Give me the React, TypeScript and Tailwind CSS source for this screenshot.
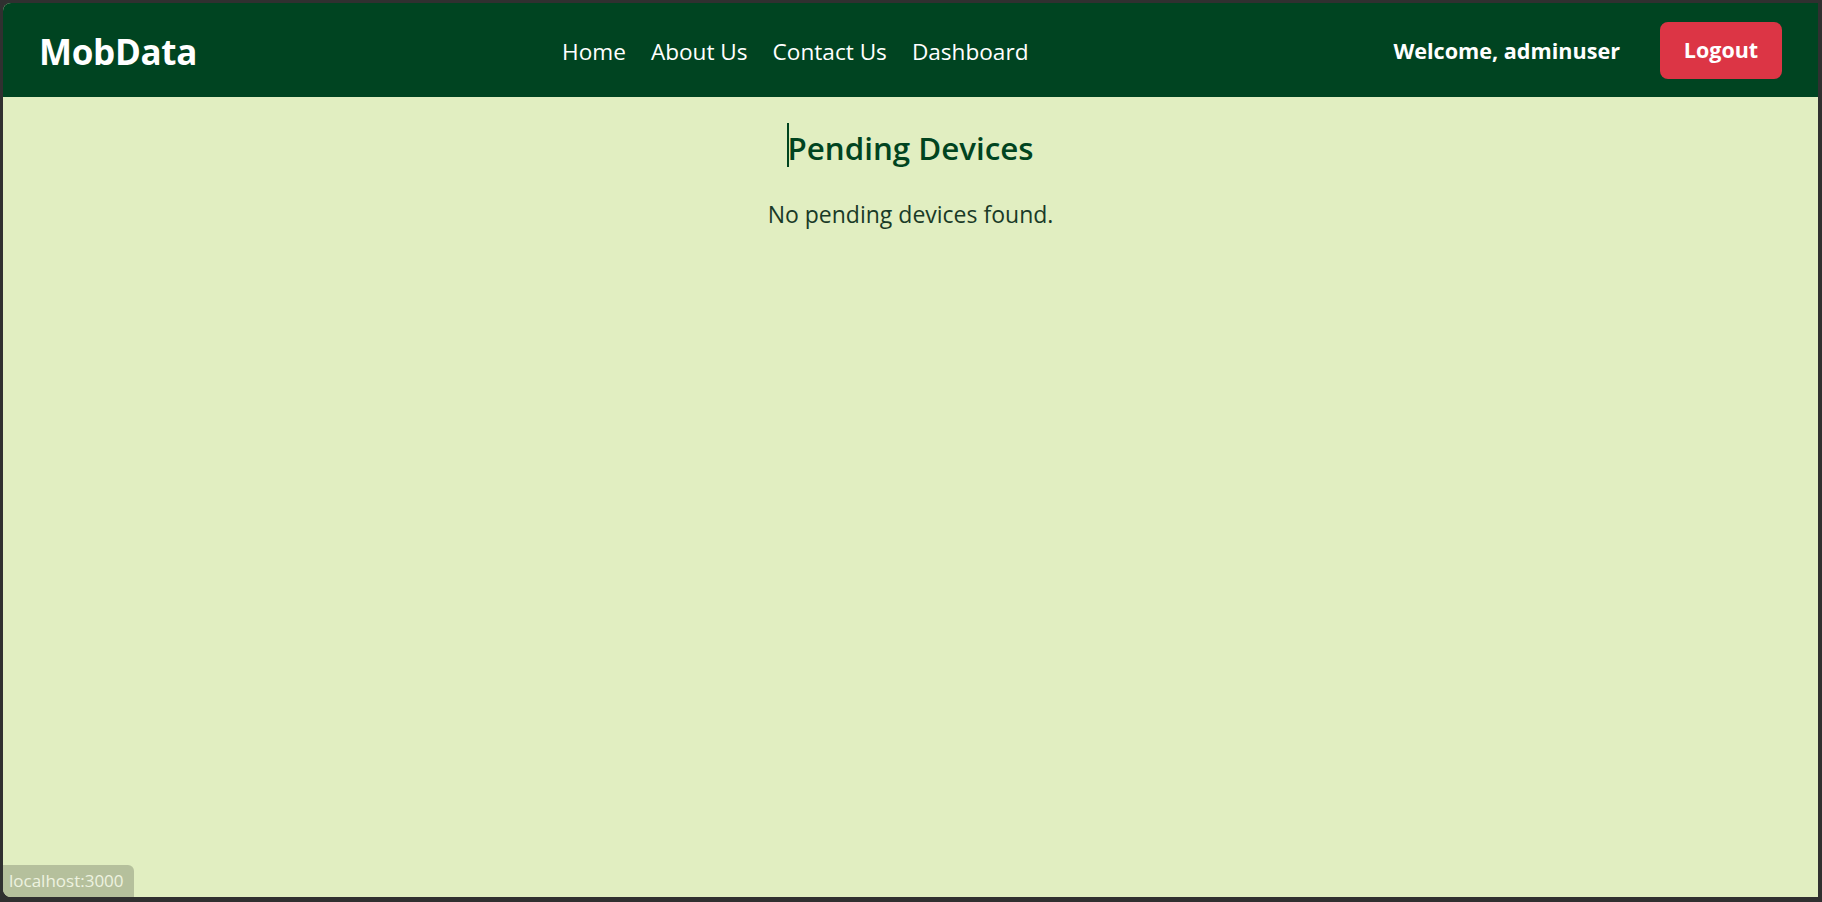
const font = "font-['Open_Sans','Noto_Sans',sans-serif]";

const NavLinks = () => {
  const links = ["Home", "About Us", "Contact Us", "Dashboard"];
  return (
    <nav className="mt-[3px] flex items-center gap-[25px] text-[22.6px] text-white">
      {links.map((l) => (
        <a key={l} href="#" className="hover:underline">
          {l}
        </a>
      ))}
    </nav>
  );
};

const App = () => {
  return (
    <div className={`h-screen w-full bg-[#303030] pt-[3px] pl-[3px] pr-[4px] pb-[5px] flex ${font}`}>
      <div className="relative flex-1 flex flex-col bg-[#e1eec1] rounded-tl-lg rounded-bl-lg overflow-hidden">
        {/* HEADER */}
        <header className="h-[94px] shrink-0 bg-[#004421] flex items-center justify-between px-9">
          <div className="mt-[4px] text-[35px] font-bold text-white tracking-[-0.3px]">MobData</div>
          <NavLinks />
          <div className="flex items-center gap-[40px]">
            <span className="mt-[3px] text-[21.6px] font-bold text-white">Welcome, adminuser</span>
            <button className="w-[122px] h-[57px] rounded-lg bg-[#dc3545] text-white text-[21.5px] font-bold">
              Logout
            </button>
          </div>
        </header>

        {/* CONTENT */}
        <main className="flex flex-col items-center">
          <h2 className="mt-[29px] text-[31.3px] font-semibold text-[#00441f] leading-[44px]">
            <span className="relative">
              Pending Devices
              {/* text caret */}
              <span className="absolute left-[-1px] top-[-4px] h-[44px] w-[2px] bg-[#00441f]" />
            </span>
          </h2>
          <p className="mt-[29px] text-[23px] leading-[30px] text-[#193a27]">No pending devices found.</p>
        </main>

        {/* STATUS BAR */}
        <div className="absolute left-0 bottom-0 h-[32px] w-[131px] bg-[#b5c09c] rounded-tr-md flex items-center pl-[6px] text-[17px] text-[#eef3e0]">
          localhost:3000
        </div>
      </div>
    </div>
  );
};

export default App;
